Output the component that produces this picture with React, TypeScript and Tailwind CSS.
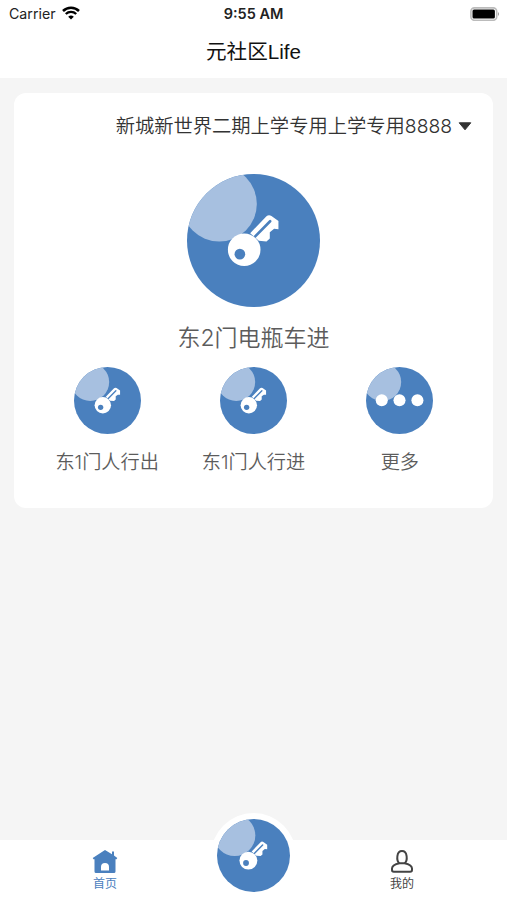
import { useState } from "react";

const doors = [
  { id: 1, name: "东1门人行出", type: "key" },
  { id: 2, name: "东1门人行进", type: "key" },
  { id: 3, name: "更多", type: "more" },
];

// Round blue button face, either a key or three dots
function RoundIcon({ type = "key", className = "" }) {
  return (
    <svg viewBox="0 0 400 400" className={className}>
      <defs>
        <clipPath id="face">
          <circle cx="200" cy="200" r="200" />
        </clipPath>
      </defs>
      <circle cx="200" cy="200" r="200" fill="#4a80be" />
      <circle cx="97" cy="90" r="113" fill="#a7c0e0" clipPath="url(#face)" />
      {type === "key" ? (
        <>
          <path
            d="M190 178 L239 127 Q246 121 254 126 L275 141 V166 L262 165 L249 175 V194 L239 203 L216 201 Z"
            fill="#fff"
          />
          <path d="M203 190 L250 142" stroke="#4a80be" strokeWidth="8" strokeLinecap="round" />
          <circle cx="172" cy="228" r="49" fill="#fff" />
          <circle cx="159" cy="241" r="16" fill="#4a80be" />
        </>
      ) : (
        <>
          <circle cx="94" cy="198" r="36" fill="#fff" />
          <circle cx="200" cy="198" r="36" fill="#fff" />
          <circle cx="307" cy="198" r="36" fill="#fff" />
        </>
      )}
    </svg>
  );
}

function StatusBar() {
  return (
    <div className="grid grid-cols-3 items-center h-[27px] pl-[9px] pr-[7px] text-[#222]">
      <div className="flex items-center gap-[6px] text-[14.2px]">
        <span>Carrier</span>
        <svg viewBox="0 0 18 14" className="w-[18px] h-[14px]" fill="none" stroke="#000">
          <path d="M1 5 A11.3 11.3 0 0 1 17 5" strokeWidth="2.5" />
          <path d="M3.8 8 A7.4 7.4 0 0 1 14.2 8" strokeWidth="2.3" />
          <path d="M9 13.6 L6.2 10.8 A4 4 0 0 1 11.8 10.8 Z" fill="#000" stroke="none" />
        </svg>
      </div>
      <div className="-ml-[2px] text-center text-[14.5px] font-semibold">9:55 AM</div>
      <svg viewBox="0 0 30 14" className="w-[30px] h-[14px] justify-self-end">
        <rect x="0.9" y="0.9" width="25.8" height="12.4" rx="3.5" fill="#fff" stroke="#bbb" strokeWidth="1.6" />
        <rect x="2.5" y="2.5" width="22.4" height="9" rx="1.5" fill="#000" />
        <path d="M28 5 Q30 7 28 9 Z" fill="#999" />
      </svg>
    </div>
  );
}

export default function App() {
  const [tab, setTab] = useState("home");

  return (
    <div className="flex flex-col w-[507px] h-[900px] overflow-hidden bg-[#f5f5f5] font-['Inter','Noto_Sans_CJK_SC',sans-serif]">
      <header className="h-[78px] bg-white">
        <StatusBar />
        <h1 className="text-center text-[20.6px] leading-[50px] text-[#111] font-['Liberation_Sans','Noto_Sans_CJK_SC',sans-serif]">
          元社区Life
        </h1>
      </header>

      <main className="flex-1 px-[14px] pt-[15px]">
        <section className="h-[415px] rounded-xl bg-white">
          <button className="flex items-center justify-end gap-[6px] w-full h-[66px] pr-[21px] text-[19.3px] font-[350] text-[#333]">
            <span>新城新世界二期上学专用上学专用8888</span>
            <svg viewBox="0 0 14 9" className="w-[14px] h-[9px]">
              <path d="M1.2 0.8 H12.8 L7 7.8 Z" fill="#333" stroke="#333" strokeLinejoin="round" />
            </svg>
          </button>

          <button className="flex flex-col items-center w-full pt-[14.5px] font-[350] text-[#5c5c5c]">
            <RoundIcon className="w-[133px] h-[133px]" />
            <span className="mt-[13px] text-[23px] leading-9">东2门电瓶车进</span>
          </button>

          <div className="grid grid-cols-3 px-5 pt-[11.5px]">
            {doors.map((door) => (
              <button key={door.id} className="flex flex-col items-center font-[350] text-[#5c5c5c]">
                <RoundIcon type={door.type} className="w-[67px] h-[67px]" />
                <span className="mt-[14px] text-[19.2px] leading-7 whitespace-nowrap">{door.name}</span>
              </button>
            ))}
          </div>
        </section>
      </main>

      <nav className="flex justify-between h-[60px] px-[65px] bg-white text-[12px] leading-4">
        <button
          onClick={() => setTab("home")}
          className={`flex flex-col items-center w-20 pt-[9px] ${
            tab === "home" ? "text-[#4a80be]" : "text-[#444]"
          }`}
        >
          <svg viewBox="0 0 26 25" className="w-[26px] h-[25px]" fill="currentColor">
            <path d="M13 1 L20 5.3 V2.5 H22 V6.6 L25.3 9 L24.5 10.3 H23.5 V22.5 Q23.5 24 22 24 H4 Q2.5 24 2.5 22.5 V10.3 H1.5 L0.7 9 Z M9 21.5 H17 V18 A4 4 0 0 0 9 18 Z" fillRule="evenodd" />
          </svg>
          <span className="mt-[2px]">首页</span>
        </button>

        <button className="w-[85px] h-[85px] -mt-[27px] rounded-full bg-white p-[6px]">
          <RoundIcon className="w-full h-full" />
        </button>

        <button
          onClick={() => setTab("mine")}
          className={`flex flex-col items-center w-20 pt-[9px] ${
            tab === "mine" ? "text-[#4a80be]" : "text-[#444]"
          }`}
        >
          <svg viewBox="0 0 24 25" className="w-6 h-[25px]" fill="none" stroke="currentColor" strokeWidth="2">
            <path d="M9.3 14.2 C6.2 11.5 6.4 2 12 2 C17.6 2 17.8 11.5 14.7 14.2" />
            <path d="M9.5 14.2 H14.5 C19 15.2 22 16.8 22 19.5 V21 Q22 22.8 20.2 22.8 H3.8 Q2 22.8 2 21 V19.5 C2 16.8 5 15.2 9.5 14.2 Z" />
          </svg>
          <span className="mt-[2px]">我的</span>
        </button>
      </nav>
    </div>
  );
}
